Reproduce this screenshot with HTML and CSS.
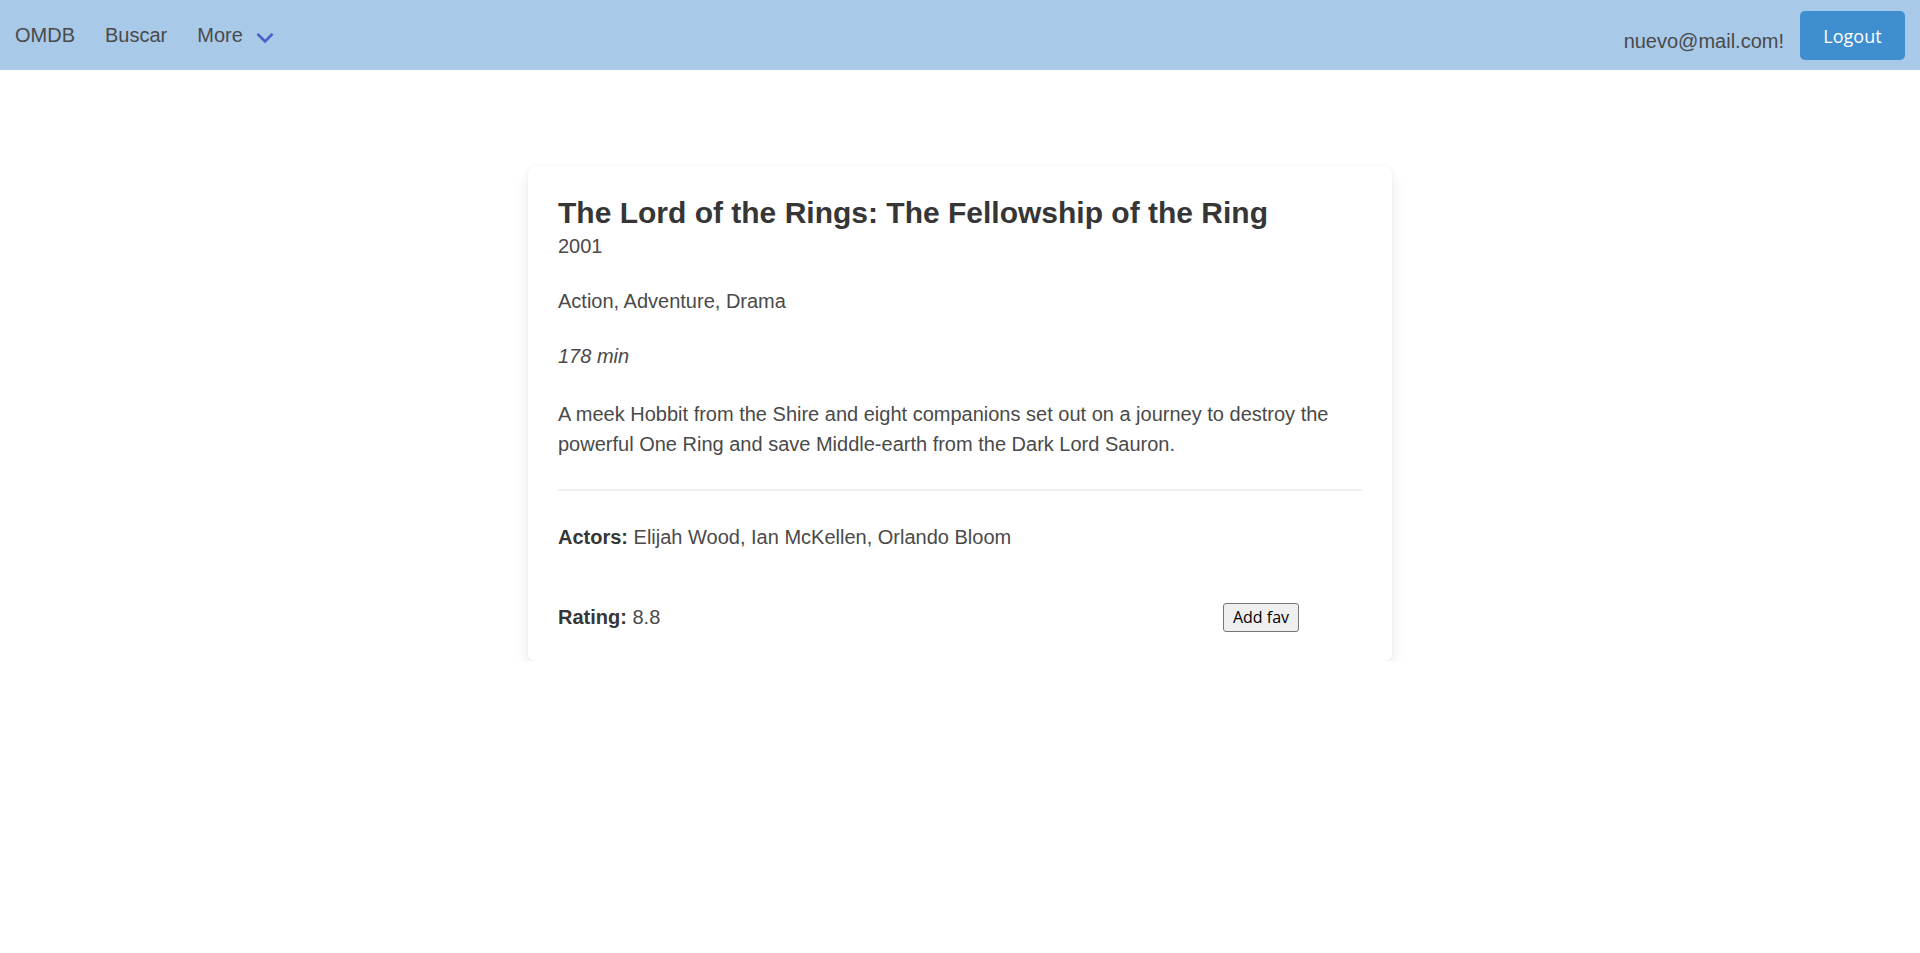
FILE: index.html
```html
<!DOCTYPE html>
<html lang="es">
<head>
<meta charset="utf-8">
<title>OMDB</title>
<link rel="stylesheet" href="styles.css">
</head>
<body>
<nav class="navbar">
  <div class="nav-start">
    <a class="nav-item">OMDB</a>
    <a class="nav-item">Buscar</a>
    <a class="nav-item nav-more">More
      <svg class="chev" width="18" height="12" viewBox="0 0 18 12"><path d="M1.5 1.8 L9 9.5 L16.5 1.8" fill="none" stroke="#485fc7" stroke-width="2.6"/></svg>
    </a>
  </div>
  <div class="nav-end">
    <span class="nav-user">nuevo@mail.com!</span>
    <button class="btn-logout">Logout</button>
  </div>
</nav>
<main class="page">
  <section class="card">
    <h1 class="title">The Lord of the Rings: The Fellowship of the Ring</h1>
    <p class="year">2001</p>
    <p class="genre">Action, Adventure, Drama</p>
    <p class="runtime">178 min</p>
    <p class="plot">A meek Hobbit from the Shire and eight companions set out on a journey to destroy the powerful One Ring and save Middle-earth from the Dark Lord Sauron.</p>
    <hr class="divider">
    <p class="actors"><strong>Actors:</strong> Elijah Wood, Ian McKellen, Orlando Bloom</p>
    <div class="rating-row">
      <p class="rating"><strong>Rating:</strong> 8.8</p>
      <button class="btn-fav">Add fav</button>
    </div>
  </section>
</main>
</body>
</html>
```
FILE: styles.css
```css
* { box-sizing: border-box; }
html, body { margin: 0; padding: 0; }
body {
  font-family: "Liberation Sans", Arial, sans-serif;
  font-size: 20px;
  color: #4a4a4a;
  background: #fff;
}
.navbar {
  height: 70px;
  background: #a8c9e8;
  display: flex;
  justify-content: space-between;
  align-items: center;
}
.nav-start { display: flex; align-items: center; }
.nav-item {
  padding: 0 15px;
  line-height: 30px;
  color: #4a4a4a;
  display: flex;
  align-items: center;
}
.nav-more .chev { margin-left: 13px; margin-top: 5px; }
.nav-end { display: flex; align-items: center; padding-right: 15px; }
.nav-user { line-height: 30px; margin-top: 11px; margin-right: 16px; }
.btn-logout {
  width: 105px;
  height: 49px;
  border: none;
  border-radius: 5px;
  background: #3e8ed0;
  color: #fff;
  font-family: "Open Sans", "Noto Sans", sans-serif;
  font-size: 18px;
  padding: 2px 0 0;
}
.page { display: flex; justify-content: center; padding-top: 96px; }
.card {
  width: 864px;
  background: #fff;
  border-radius: 7px;
  box-shadow: 0 8px 16px -2px rgba(10,10,10,0.12), 0 0 0 1px rgba(10,10,10,0.02);
  padding: 30px 30px 29px;
}
.card p { margin: 0; line-height: 30px; }
.title {
  margin: 0;
  font-size: 30px;
  line-height: 34px;
  font-weight: 700;
  color: #363636;
}
.card .year { margin-top: 1px; }
.card .genre { margin-top: 25px; }
.card .runtime { margin-top: 25px; font-style: italic; }
.card .plot { margin-top: 28px; }
.divider {
  margin: 30px 0 0;
  border: none;
  height: 2px;
  background: #efefef;
}
.card .actors { margin-top: 31px; }
.card strong { color: #363636; font-weight: 700; }
.rating-row {
  margin-top: 50px;
  display: grid;
  grid-template-columns: 665px auto;
  align-items: center;
}
.btn-fav {
  justify-self: start;
  height: 29px;
  width: 76px;
  padding: 0;
  font-family: "Open Sans", "Noto Sans", sans-serif;
  font-size: 16px;
  color: #000;
  background: #efefef;
  border: 1px solid #767676;
  border-radius: 3px;
}
```
